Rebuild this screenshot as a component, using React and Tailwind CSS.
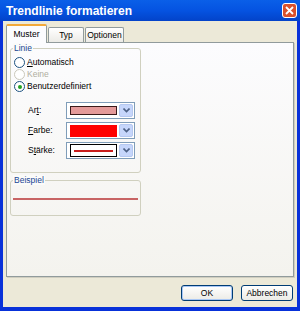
import React from "react";

const Dropdown = ({ children }) => (
  <div className="flex h-[17px] w-[69px] items-center border border-[#7f9db9] bg-white p-[1px]">
    <div className="flex h-full flex-1 items-center px-[2px]">{children}</div>
    <div className="flex h-full w-[14px] items-center justify-center rounded-[2px] border border-[#b5c8f0] bg-[#c6d6fb]">
      <svg width="7" height="5" viewBox="0 0 7 5">
        <path d="M0.5 0.5 L3.5 3.5 L6.5 0.5" stroke="#4d6185" strokeWidth="1.6" fill="none" />
      </svg>
    </div>
  </div>
);

const Radio = ({ checked, disabled, children }) => (
  <div className={`flex h-[11px] items-center gap-[2px] ${disabled ? "text-[#b0aea0]" : "text-black"}`}>
    <div className={`flex h-[11px] w-[11px] items-center justify-center rounded-full border ${disabled ? "border-[#cac8bb]" : "border-[#1c5180]"} bg-white`}>
      {checked && <div className="h-[4px] w-[4px] rounded-full bg-[#21a121]" />}
    </div>
    <span>{children}</span>
  </div>
);

const Group = ({ label, className, children }) => (
  <div className={`relative rounded-[3px] border border-[#d0d0bf] ${className}`}>
    <span className="absolute -top-[6px] left-[2px] bg-[#fbfbf9] px-[1px] leading-[10px] text-[#1a4594]">{label}</span>
    {children}
  </div>
);

const Field = ({ label, children }) => (
  <div className="flex items-center">
    <span className="w-[52px] pl-[14px]">{label}</span>
    {children}
  </div>
);

export default function App() {
  return (
    <div
      className="flex h-[311px] w-[300px] flex-col bg-[#0831d9] text-[8.5px] leading-none"
      style={{ fontFamily: '"Liberation Sans", Arial, sans-serif' }}
    >
      {/* title bar */}
      <div className="flex h-[21px] items-center justify-between bg-gradient-to-b from-[#0a5fe8] via-[#0553e1] to-[#0343c9] pl-[6px] pr-[3px]">
        <span className="text-[12px] font-bold text-white">Trendlinie formatieren</span>
        <div className="flex h-[15px] w-[15px] items-center justify-center rounded-[3px] border border-white bg-[#d9512c]">
          <svg width="9" height="9" viewBox="0 0 9 9">
            <path d="M1 1 L8 8 M8 1 L1 8" stroke="white" strokeWidth="1.8" />
          </svg>
        </div>
      </div>

      {/* body */}
      <div className="mx-[3px] mb-[4px] flex flex-1 flex-col bg-[#ece9d8] px-[3px]">
        {/* tabs */}
        <div className="mt-[3px] flex h-[18px] items-end">
          <div className="relative z-10 -mb-[1px] flex h-[19px] w-[41px] items-center justify-center rounded-t-[2px] border border-b-0 border-[#919b9c] border-t-[2px] border-t-[#f2a93a] bg-[#fcfcfe]">
            Muster
          </div>
          <div className="ml-[1px] flex h-[15px] w-[36px] items-center justify-center rounded-t-[2px] border border-b-0 border-[#919b9c] bg-gradient-to-b from-white to-[#ecebe6]">
            Typ
          </div>
          <div className="ml-[1px] flex h-[15px] w-[39px] items-center justify-center rounded-t-[2px] border border-b-0 border-[#919b9c] bg-gradient-to-b from-white to-[#ecebe6]">
            Optionen
          </div>
        </div>

        {/* panel */}
        <div className="flex h-[235px] flex-col border border-[#919b9c] bg-gradient-to-b from-[#fcfcfe] to-[#f4f3ee] pl-[3px] pt-[5px] shadow-[1px_1px_0_#d0cec0]">
          <Group label="Linie" className="h-[125px] w-[131px] px-[3px] pt-[8px]">
            <div className="flex flex-col gap-[1px]">
              <Radio><span className="underline">A</span>utomatisch</Radio>
              <Radio disabled>Keine</Radio>
              <Radio checked>Benutzerdefiniert</Radio>
            </div>
            <div className="mt-[10px] flex flex-col gap-[3px]">
              <Field label={<>Ar<span className="underline">t</span>:</>}>
                <Dropdown>
                  <div className="h-[9px] w-full border border-[#3a1a1a] bg-[#e49a9a]" />
                </Dropdown>
              </Field>
              <Field label={<><span className="underline">F</span>arbe:</>}>
                <Dropdown>
                  <div className="h-[12px] w-full bg-[#ff0000]" />
                </Dropdown>
              </Field>
              <Field label={<>S<span className="underline">t</span>ärke:</>}>
                <Dropdown>
                  <div className="flex h-[13px] w-full items-center border border-black px-[3px]">
                    <div className="h-[2px] w-full bg-[#c81e1e]" />
                  </div>
                </Dropdown>
              </Field>
            </div>
          </Group>

          <Group label="Beispiel" className="mt-[7px] h-[36px] w-[131px] px-[2px] pt-[17px]">
            <div className="h-[2px] w-full bg-[#c86464]" />
          </Group>
        </div>

        {/* buttons */}
        <div className="mt-[8px] flex justify-end gap-[8px] pr-[1px]">
          <button className="h-[16px] w-[52px] rounded-[3px] border border-[#003c74] bg-gradient-to-b from-white to-[#ecebe6] text-[8.5px] shadow-[inset_0_0_0_1px_#a9c7f5]">
            OK
          </button>
          <button className="h-[16px] w-[52px] rounded-[3px] border border-[#003c74] bg-gradient-to-b from-white to-[#ecebe6] text-[8.5px]">
            Abbrechen
          </button>
        </div>
      </div>
    </div>
  );
}
